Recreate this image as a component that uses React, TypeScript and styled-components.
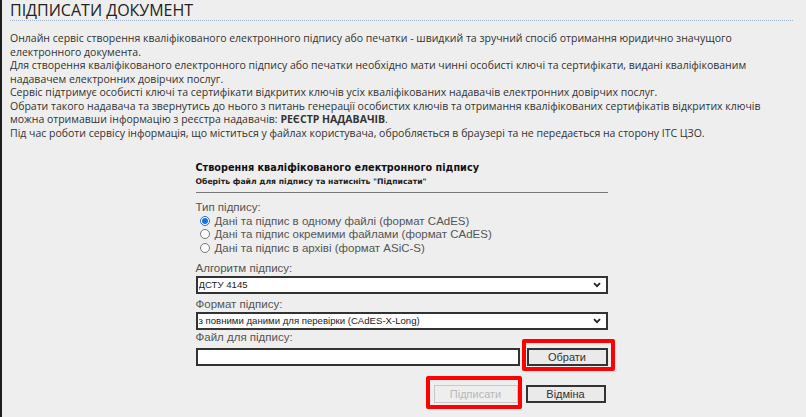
import React from 'react';
import styled, { createGlobalStyle } from 'styled-components';

const GlobalStyle = createGlobalStyle`
  html, body {
    margin: 0;
    padding: 0;
    background: #eeeeee;
  }
  body {
    font-family: "Open Sans", "Liberation Sans", Arial, sans-serif;
  }
`;

const Page = styled.div`
  height: 417px;
  overflow: hidden;
  box-sizing: border-box;
  background: #eeeeee;
  border-left: 2px solid #1e1e1e;
  padding: 0 13px 0 8px;
`;

const Heading = styled.h1`
  margin: 0;
  padding: 1px 0 1px;
  font-family: "Open Sans", "Liberation Sans", sans-serif;
  font-size: 16px;
  font-weight: 400;
  line-height: 18px;
  color: #222;
  border-bottom: 1px dotted #9db4cc;
`;

const Intro = styled.div`
  margin-top: 11px;
  width: 770px;
  font-family: "Open Sans", "Liberation Sans", sans-serif;
  font-size: 10.5px;
  line-height: 13.5px;
  color: #333;
`;

const Line = styled.p`
  margin: 0;
`;

const Strong = styled.b`
  font-weight: 700;
`;

const Form = styled.form`
  width: 412px;
  margin: 21px auto 0;
  display: flex;
  flex-direction: column;
  font-family: "Liberation Sans", Arial, sans-serif;
`;

const Title = styled.div`
  font-family: "DejaVu Sans", Verdana, sans-serif;
  font-size: 9.7px;
  font-weight: 700;
  line-height: 14px;
  color: #111;
`;

const Subtitle = styled.div`
  font-family: "DejaVu Sans", Verdana, sans-serif;
  font-size: 7.7px;
  font-weight: 700;
  line-height: 12px;
  margin-top: 1px;
  color: #222;
  padding-bottom: 4px;
  border-bottom: 1px solid #777;
`;

const Label = styled.div<{ $top?: number }>`
  margin-top: ${(p) => p.$top ?? 0}px;
  font-size: 11.5px;
  line-height: 13px;
  color: #555;
`;

const RadioList = styled.div`
  display: flex;
  flex-direction: column;
  padding-left: 2px;
`;

const RadioRow = styled.label`
  display: flex;
  align-items: center;
  height: 13.5px;
  font-size: 11.5px;
  color: #555;
`;

const Radio = styled.input`
  width: 10px;
  height: 10px;
  margin: 0 5px 0 2px;
  accent-color: #1a6fe0;
`;

const SelectWrap = styled.div`
  position: relative;
  margin-top: 1px;
  height: 18px;
`;

const Select = styled.select`
  appearance: none;
  display: block;
  width: 100%;
  height: 18px;
  box-sizing: border-box;
  margin: 0;
  border: 2px solid #333;
  border-radius: 0;
  background: #fff;
  padding: 0 20px 0 1px;
  font-family: "Liberation Sans", Arial, sans-serif;
  font-size: 9.6px;
  color: #222;
  outline: none;
`;

const Chevron = styled.svg`
  position: absolute;
  right: 7px;
  top: 6px;
  width: 8px;
  height: 6px;
  pointer-events: none;
`;

const FileRow = styled.div`
  display: flex;
  gap: 7px;
  margin-top: 4px;
  height: 18px;
`;

const FileInput = styled.input`
  display: block;
  width: 324px;
  height: 18px;
  box-sizing: border-box;
  border: 2px solid #333;
  background: #fff;
  margin: 0;
  padding: 0 3px;
`;

const Marked = styled.span<{ $t: number; $r: number; $b: number; $l: number }>`
  position: relative;
  display: inline-flex;
  &::after {
    content: '';
    position: absolute;
    top: -${(p) => p.$t}px;
    right: -${(p) => p.$r}px;
    bottom: -${(p) => p.$b}px;
    left: -${(p) => p.$l}px;
    border: 4px solid #ff0000;
    border-radius: 2px;
    pointer-events: none;
  }
`;

const Button = styled.button<{ $w: number }>`
  display: block;
  width: ${(p) => p.$w}px;
  height: 18px;
  box-sizing: border-box;
  margin: 0;
  border: 2px solid #333;
  border-radius: 0;
  background: #eaeaea;
  padding: 0;
  font-family: "Liberation Sans", Arial, sans-serif;
  font-size: 11px;
  font-weight: 400;
  color: #333;
  &:disabled {
    border: 1px solid #c8c8c8;
    color: #b8b8b8;
    background: #eeeeee;
  }
`;

const Actions = styled.div`
  display: flex;
  justify-content: flex-end;
  gap: 8px;
  margin-top: 19px;
  padding-right: 2px;
`;

function ArrowDown() {
  return (
    <Chevron viewBox="0 0 8 6">
      <path d="M1 1.2 L4 4.2 L7 1.2" fill="none" stroke="#222" strokeWidth="1.8" />
    </Chevron>
  );
}

export default function App() {
  return (
    <>
      <GlobalStyle />
      <Page>
        <Heading>ПІДПИСАТИ ДОКУМЕНТ</Heading>

        <Intro>
          <Line>
            Онлайн сервіс створення кваліфікованого електронного підпису або печатки - швидкий та зручний спосіб
            отримання юридично значущого електронного документа.
          </Line>
          <Line>
            Для створення кваліфікованого електронного підпису або печатки необхідно мати чинні особисті ключі та
            сертифікати, видані кваліфікованим надавачем електронних довірчих послуг.
          </Line>
          <Line>
            Сервіс підтримує особисті ключі та сертифікати відкритих ключів усіх кваліфікованих надавачів електронних
            довірчих послуг.
          </Line>
          <Line>
            Обрати такого надавача та звернутись до нього з питань генерації особистих ключів та отримання
            кваліфікованих сертифікатів відкритих ключів можна отримавши інформацію з реєстра надавачів:{' '}
            <Strong>РЕЄСТР НАДАВАЧІВ</Strong>.
          </Line>
          <Line>
            Під час роботи сервісу інформація, що міститься у файлах користувача, обробляється в браузері та не
            передається на сторону ІТС ЦЗО.
          </Line>
        </Intro>

        <Form onSubmit={(e) => e.preventDefault()}>
          <Title>Створення кваліфікованого електронного підпису</Title>
          <Subtitle>Оберіть файл для підпису та натисніть "Підписати"</Subtitle>

          <Label $top={8}>Тип підпису:</Label>
          <RadioList>
            <RadioRow>
              <Radio type="radio" name="kind" defaultChecked />
              Дані та підпис в одному файлі (формат CAdES)
            </RadioRow>
            <RadioRow>
              <Radio type="radio" name="kind" />
              Дані та підпис окремими файлами (формат CAdES)
            </RadioRow>
            <RadioRow>
              <Radio type="radio" name="kind" />
              Дані та підпис в архіві (формат ASiC-S)
            </RadioRow>
          </RadioList>

          <Label $top={7}>Алгоритм підпису:</Label>
          <SelectWrap>
            <Select defaultValue="dstu">
              <option value="dstu">ДСТУ 4145</option>
            </Select>
            <ArrowDown />
          </SelectWrap>

          <Label $top={4}>Формат підпису:</Label>
          <SelectWrap>
            <Select defaultValue="xlong">
              <option value="xlong">з повними даними для перевірки (CAdES-X-Long)</option>
            </Select>
            <ArrowDown />
          </SelectWrap>

          <Label $top={1}>Файл для підпису:</Label>
          <FileRow>
            <FileInput type="text" readOnly />
            <Marked $t={9} $r={7} $b={5} $l={5}>
              <Button type="button" $w={81}>
                Обрати
              </Button>
            </Marked>
          </FileRow>

          <Actions>
            <Marked $t={9} $r={4} $b={6} $l={8}>
              <Button type="submit" $w={84} disabled>
                Підписати
              </Button>
            </Marked>
            <Button type="button" $w={80}>
              Відміна
            </Button>
          </Actions>
        </Form>
      </Page>
    </>
  );
}
